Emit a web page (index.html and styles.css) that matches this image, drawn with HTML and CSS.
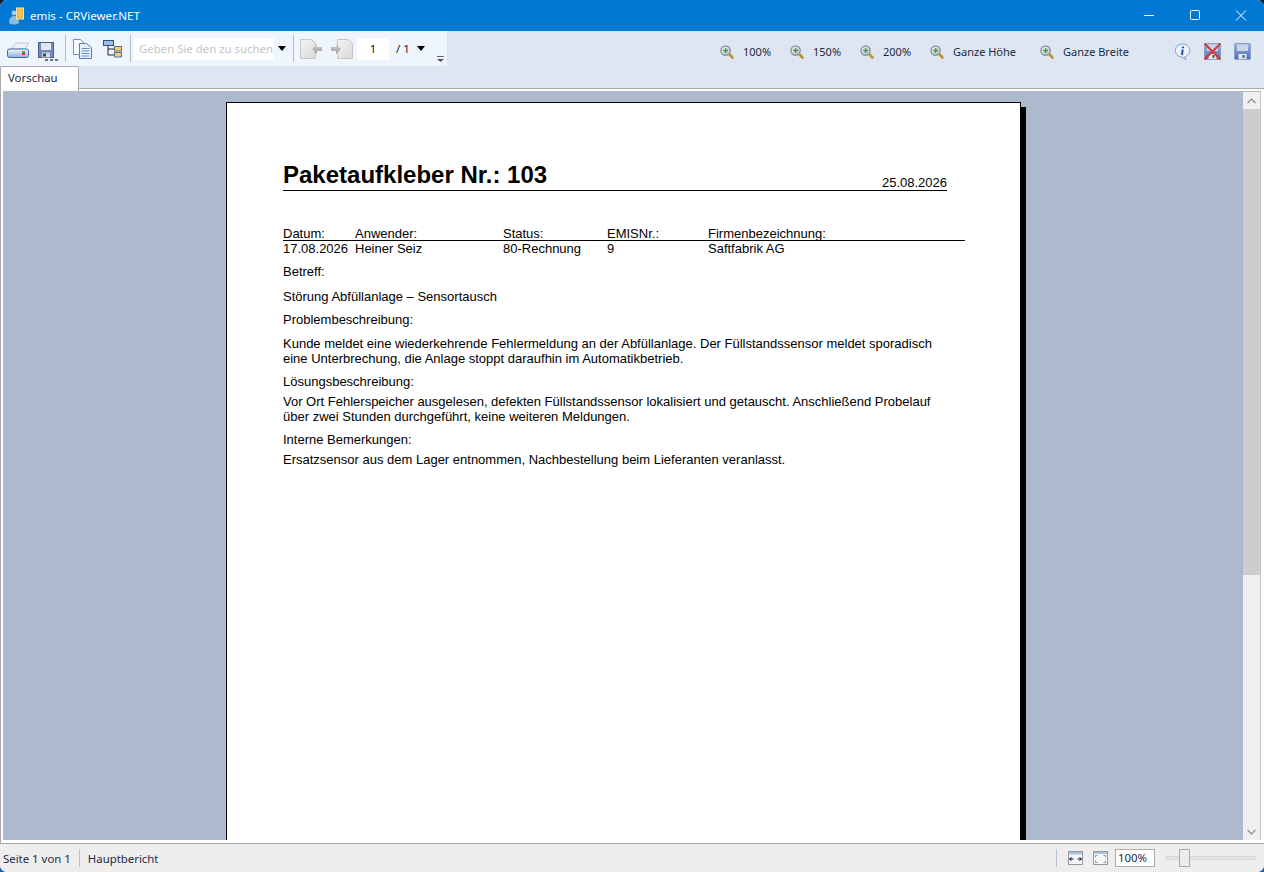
FILE: index.html
```html
<!DOCTYPE html>
<html lang="de">
<head>
    <meta charset="UTF-8">
    <title>emis - CRViewer.NET</title>
    <link rel="stylesheet" href="styles.css">
</head>
<body>
<svg class="defs" width="0" height="0">
    <defs>
        <linearGradient id="lens" x1="0" y1="0" x2="1" y2="1">
            <stop offset="0" stop-color="#f4f6f6"/>
            <stop offset="1" stop-color="#b4c0c0"/>
        </linearGradient>
        <linearGradient id="disk" x1="0" y1="0" x2="0" y2="1">
            <stop offset="0" stop-color="#9db5e0"/>
            <stop offset="1" stop-color="#4a6cb8"/>
        </linearGradient>
        <linearGradient id="sheet" x1="0" y1="0" x2="1" y2="1">
            <stop offset="0" stop-color="#f4f4f4"/>
            <stop offset="1" stop-color="#d8d8d8"/>
        </linearGradient>
        <linearGradient id="pageArrow" x1="0" y1="0" x2="0" y2="1">
            <stop offset="0" stop-color="#d4d4d4"/>
            <stop offset="1" stop-color="#9a9a9a"/>
        </linearGradient>
        <linearGradient id="printer" x1="0" y1="0" x2="0" y2="1">
            <stop offset="0" stop-color="#f4f7fb"/>
            <stop offset="1" stop-color="#8fb0dc"/>
        </linearGradient>
        <symbol id="zoomIcon" viewBox="0 0 14 14">
            <circle cx="5.6" cy="5.6" r="4.6" fill="url(#lens)" stroke="#8b9a9e" stroke-width="1.5"/>
            <path d="M5.6 3.200v4.800M3.200 5.600h4.800" stroke="#4a8f5a" stroke-width="1.500"/>
            <path d="M9.600 9.600l2.800 2.800" stroke="#b8963c" stroke-width="2.800" stroke-linecap="round"/>
        </symbol>
        <symbol id="diskIcon" viewBox="0 0 17 17">
            <rect x=".5" y=".5" width="16" height="16" rx="1" fill="url(#disk)" stroke="#8ea0c6"/>
            <rect x="3" y="1.500" width="11" height="6.500" fill="#c9d5ea"/>
            <rect x="4.500" y="11" width="8" height="5" fill="#e4e8ee"/>
            <rect x="8.500" y="12" width="2" height="3" fill="#555"/>
        </symbol>
    </defs>
</svg>
<div class="window">
    <header class="titlebar">
        <svg class="appIcon" width="17" height="18" viewBox="0 0 17 18">
            <circle cx="6" cy="6" r="2.400" fill="#a9cbe8"/>
            <path d="M1 16c0-5 2-7 5-7s5 2 5 7c-3 2-7 2-10 0z" fill="#8fb9de"/>
            <rect x="8.500" y="1" width="7" height="11" fill="#e8b740" stroke="#f4e4b0"/>
            <rect x="10.500" y="2.500" width="3" height="8" fill="#f0c860"/>
        </svg>
        <span class="titleText">emis - CRViewer.NET</span>
        <div class="winButtons">
            <svg width="46" height="31" viewBox="0 0 46 31"><path d="M18 15.500h10" stroke="#fff"/></svg>
            <svg width="46" height="31" viewBox="0 0 46 31"><rect x="18.500" y="10.500" width="9" height="9" rx="1" fill="none" stroke="#fff"/></svg>
            <svg width="46" height="31" viewBox="0 0 46 31"><path d="M18 10.500l10 10M28 10.500l-10 10" stroke="#fff"/></svg>
        </div>
    </header>

    <div class="toolArea">
        <div class="toolStrip">
            <svg class="stripIcon printIcon" width="23" height="16" viewBox="0 0 23 16">
                <path d="M4 7L9 1h13l-4 6z" fill="#eef1f5" stroke="#c2c8d0"/>
                <rect x=".5" y="7" width="21" height="8.500" rx="2" fill="url(#printer)" stroke="#3f6aa8"/>
                <rect x="15" y="9" width="3" height="2" fill="#3fb34f"/>
                <rect x="15" y="11" width="3" height="2" fill="#d9304f"/>
            </svg>
            <svg class="stripIcon saveIcon" width="21" height="20" viewBox="0 0 21 20">
                <rect x=".5" y=".5" width="15" height="15" fill="#6f8cc0" stroke="#4a5f8c"/>
                <rect x="3" y="1" width="10" height="7" fill="#e2e6ec"/>
                <rect x="4" y="10.500" width="8" height="5" fill="#d6d9de"/>
                <rect x="5" y="11.500" width="3" height="3" fill="#444"/>
                <path d="M7 18h3M12 18h3M17 18h3" stroke="#6c727a" stroke-width="2"/>
            </svg>
            <span class="sep"></span>
            <svg class="stripIcon copyIcon" width="19" height="20" viewBox="0 0 19 20">
                <path d="M.5.500h7l4 4v11h-11z" fill="#f7fbff" stroke="#6f93c6"/>
                <path d="M6.500 4.500h7l5 4v11h-12z" fill="#eaf3fc" stroke="#4f7db8"/>
                <path d="M8.500 9.500h8M8.500 12h8M8.500 14.500h8M8.500 17h8" stroke="#5f94cc"/>
            </svg>
            <svg class="stripIcon treeIcon" width="19" height="18" viewBox="0 0 19 18">
                <rect x=".5" y=".5" width="10" height="5" fill="#9dbce6" stroke="#2e4f8a"/>
                <path d="M5 6v9h6M5 9h6" fill="none" stroke="#222"/>
                <rect x="11.500" y="6.500" width="7" height="4.500" fill="#f3cf6d" stroke="#5b6e94"/>
                <rect x="11.500" y="12.500" width="7" height="4.500" fill="#f3cf6d" stroke="#5b6e94"/>
            </svg>
            <span class="sep sepSearch"></span>
            <div class="searchBox">Geben Sie den zu suchen</div>
            <span class="arrow arrowSearch"></span>
            <span class="sep sepNav"></span>
            <svg class="stripIcon prevIcon" width="23" height="20" viewBox="0 0 23 20">
                <path d="M.5.500h11l4 4v15H.5z" fill="url(#sheet)" stroke="#c6c6c6"/>
                <path d="M12 10l5-5v3h5v4h-5v3z" fill="url(#pageArrow)"/>
            </svg>
            <svg class="stripIcon nextIcon" width="23" height="20" viewBox="0 0 23 20">
                <path d="M7.500.500h11l4 4v15h-15z" fill="url(#sheet)" stroke="#c6c6c6"/>
                <path d="M11 10L6 5v3H1v4h5v3z" fill="url(#pageArrow)"/>
            </svg>
            <div class="pageBox">1</div>
            <span class="pageTotal">/ 1</span>
            <span class="arrow arrowPage"></span>
            <svg class="grip" width="7" height="6" viewBox="0 0 7 6"><path d="M0 .5h7" stroke="#666"/><path d="M0 3h7L3.500 6z" fill="#555"/></svg>
        </div>
        <div class="zoomGroup">
            <div class="zoomBtn"><svg width="14" height="14"><use href="#zoomIcon"/></svg><span>100%</span></div>
            <div class="zoomBtn"><svg width="14" height="14"><use href="#zoomIcon"/></svg><span>150%</span></div>
            <div class="zoomBtn"><svg width="14" height="14"><use href="#zoomIcon"/></svg><span>200%</span></div>
            <div class="zoomBtn zoomWide"><svg width="14" height="14"><use href="#zoomIcon"/></svg><span>Ganze Höhe</span></div>
            <div class="zoomBtn zoomWide"><svg width="14" height="14"><use href="#zoomIcon"/></svg><span>Ganze Breite</span></div>
        </div>
        <div class="rightIcons">
            <svg width="17" height="17" viewBox="0 0 17 17">
                <path d="M8.500 1a7 6.500 0 0 1 2 12.800L12 16.500l-4-2.500A7 6.500 0 0 1 8.500 1z" fill="#eaf2fb" stroke="#7fa3d6"/>
                <path d="M9 3.500v1.800M8.700 6.500L8 12" stroke="#2456a8" stroke-width="2"/>
            </svg>
            <svg width="17" height="17" viewBox="0 0 17 17">
                <use href="#diskIcon"/>
                <path d="M.5.500l16 16M16.500.500l-16 16" stroke="#d9382e" stroke-width="2"/>
            </svg>
            <svg width="17" height="17"><use href="#diskIcon"/></svg>
        </div>
        <div class="tabRow">
            <div class="tab">Vorschau</div>
        </div>
    </div>

    <main class="frame">
        <div class="viewer">
            <div class="canvas">
                <article class="page">
                    <div class="reportHead">
                        <h1>Paketaufkleber Nr.: 103</h1>
                        <span class="printDate">25.08.2026</span>
                    </div>
                    <div class="fieldRow fieldLabels">
                        <span>Datum:</span><span>Anwender:</span><span>Status:</span><span>EMISNr.:</span><span>Firmenbezeichnung:</span>
                    </div>
                    <div class="fieldRow fieldValues">
                        <span>17.08.2026</span><span>Heiner Seiz</span><span>80-Rechnung</span><span>9</span><span>Saftfabrik AG</span>
                    </div>
                    <p class="rep rBetreff">Betreff:</p>
                    <p class="rep rStoerung">Störung Abfüllanlage – Sensortausch</p>
                    <p class="rep rProblem">Problembeschreibung:</p>
                    <p class="rep rKunde">Kunde meldet eine wiederkehrende Fehlermeldung an der Abfüllanlage. Der Füllstandssensor meldet sporadisch<br>eine Unterbrechung, die Anlage stoppt daraufhin im Automatikbetrieb.</p>
                    <p class="rep rLoesung">Lösungsbeschreibung:</p>
                    <p class="rep rVor">Vor Ort Fehlerspeicher ausgelesen, defekten Füllstandssensor lokalisiert und getauscht. Anschließend Probelauf<br>über zwei Stunden durchgeführt, keine weiteren Meldungen.</p>
                    <p class="rep rInterne">Interne Bemerkungen:</p>
                    <p class="rep rErsatz">Ersatzsensor aus dem Lager entnommen, Nachbestellung beim Lieferanten veranlasst.</p>
                </article>
            </div>
            <div class="scrollbar">
                <div class="scrollBtn"><svg width="9" height="6" viewBox="0 0 9 6"><path d="M.5 5l4-4 4 4" fill="none" stroke="#8a8a8a" stroke-width="1.200"/></svg></div>
                <div class="scrollThumb"></div>
                <div class="scrollRest"></div>
                <div class="scrollBtn"><svg width="9" height="6" viewBox="0 0 9 6"><path d="M.5 1l4 4 4-4" fill="none" stroke="#8a8a8a" stroke-width="1.200"/></svg></div>
            </div>
        </div>
    </main>

    <footer class="statusBar">
        <span class="stPage">Seite 1 von 1</span>
        <span class="stSep"></span>
        <span class="stReport">Hauptbericht</span>
        <span class="stSep stSepRight"></span>
        <svg class="fitIcon" width="15" height="14" viewBox="0 0 15 14">
            <rect x=".5" y=".5" width="14" height="13" fill="#f4f6f8" stroke="#8f9aa6"/>
            <rect x="1" y="1" width="13" height="2.500" fill="#a9c4de"/>
            <path d="M1.500 8h4M1.500 8l2-1.500M1.500 8l2 1.500M13.500 8h-4M13.500 8l-2-1.500M13.500 8l-2 1.500" fill="none" stroke="#111"/>
        </svg>
        <svg class="fitIcon fitPage" width="15" height="14" viewBox="0 0 15 14">
            <rect x=".5" y=".5" width="14" height="13" fill="#f4f6f8" stroke="#8f9aa6"/>
            <rect x="1" y="1" width="13" height="2" fill="#a9c4de"/>
            <path d="M2.500 6.500v-2h2M12.500 6.500v-2h-2M2.500 9.500v2h2M12.500 9.500v2h-2" fill="none" stroke="#8f9aa6"/>
        </svg>
        <div class="zoomValue">100%</div>
        <div class="slider"><span class="sliderThumb"></span></div>
    </footer>
</div>
</body>
</html>
```

FILE: styles.css
```css
html, body {
    margin: 0;
    height: 100%;
}
body {
    background: linear-gradient(#10161f, #0a62b0);
    overflow: hidden;
}
.defs {
    position: absolute;
}
.window {
    width: 1264px;
    height: 872px;
    display: flex;
    flex-direction: column;
    border-radius: 7px;
    overflow: hidden;
    background: #fff;
    font-family: "Noto Sans", sans-serif;
    font-size: 11.4px;
    color: #1b2a44;
}

/* title bar */
.titlebar {
    height: 31px;
    flex: none;
    display: flex;
    align-items: center;
    background: #0078d4;
    color: #fff;
    padding-left: 8px;
}
.titleText {
    font-size: 11.6px;
}
.appIcon {
    margin-right: 5px;
}
.winButtons {
    margin-left: auto;
    display: flex;
}

/* toolbar */
.toolArea {
    height: 57px;
    flex: none;
    position: relative;
    display: flex;
    align-items: flex-start;
    background: #dde6f1;
}
.toolStrip {
    width: 447px;
    height: 35px;
    flex: none;
    display: flex;
    align-items: center;
    background: #eef5fd;
    position: relative;
}
.stripIcon {
    flex: none;
}
.printIcon { margin-left: 7px; margin-top: 2px; }
.saveIcon { margin-left: 8px; margin-top: 6px; }
.copyIcon { margin-left: 7px; }
.treeIcon { margin-left: 11px; }
.sep {
    width: 1px;
    height: 27px;
    background: #b4bcc8;
    margin-left: 6px;
    flex: none;
}
.sepSearch { margin-left: 8px; }
.sepNav { margin-left: 7px; }
.searchBox {
    width: 135px;
    height: 22px;
    margin-left: 3px;
    padding-left: 5px;
    line-height: 22px;
    background: #fff;
    color: #c4c4c4;
    white-space: nowrap;
}
.arrow {
    width: 0;
    height: 0;
    border-left: 4.5px solid transparent;
    border-right: 4.5px solid transparent;
    border-top: 5px solid #000;
    flex: none;
}
.arrowSearch { margin-left: 4px; }
.prevIcon { margin-left: 6px; }
.nextIcon { margin-left: 7px; }
.pageBox {
    width: 32px;
    height: 22px;
    margin-left: 4px;
    line-height: 22px;
    text-align: center;
    background: #fff;
    color: #111;
}
.pageTotal {
    margin-left: 7px;
    width: 21px;
    color: #222;
}
.grip {
    position: absolute;
    left: 437px;
    top: 25px;
}
.zoomGroup {
    position: absolute;
    left: 720px;
    top: 14px;
    display: flex;
    font-size: 11px;
}
.zoomBtn {
    width: 70px;
    display: flex;
    align-items: center;
    line-height: 14px;
    white-space: nowrap;
}
.zoomBtn svg {
    flex: none;
}
.zoomWide {
    width: 110px;
}
.zoomBtn span {
    margin-left: 9px;
}
.rightIcons {
    position: absolute;
    left: 1174px;
    top: 12px;
    display: flex;
    gap: 13px;
}
.tabRow {
    position: absolute;
    left: 0;
    top: 35px;
}
.tab {
    width: 79px;
    height: 25px;
    box-sizing: border-box;
    padding-left: 7px;
    line-height: 22px;
    background: #fff;
    border: 1px solid #a9a9a9;
    border-bottom: none;
    border-radius: 2px 2px 0 0;
    position: relative;
    z-index: 1;
}

/* report area */
.frame {
    flex: 1;
    min-height: 0;
    border-top: 1px solid #a9a9a9;
    border-bottom: 1px solid #a9a9a9;
    border-left: 1px solid #a9a9a9;
    padding: 2px 3px 3px 2px;
    display: flex;
    background: #fff;
}
.viewer {
    flex: 1;
    display: flex;
    min-width: 0;
    background: #adb9cd;
    border-right: 1px solid #c4c4c4;
}
.canvas {
    flex: 1;
    padding: 11px 0 0 223px;
    overflow: hidden;
}
.page {
    width: 795px;
    height: 900px;
    box-sizing: border-box;
    border: 1px solid #000;
    background: #fff;
    box-shadow: 5px 5px 0 #000;
    padding: 58px 73px 0 56px;
    font-family: "Liberation Sans", Arial, sans-serif;
    font-size: 13px;
    line-height: 15px;
    color: #000;
}
.reportHead {
    display: flex;
    justify-content: space-between;
    align-items: flex-end;
    width: 664px;
    height: 29px;
    border-bottom: 1px solid #000;
}
.reportHead h1 {
    margin: 0 0 1px;
    font-size: 24px;
    line-height: 28px;
    font-weight: bold;
}
.printDate {
    line-height: 15px;
}
.fieldRow {
    display: grid;
    grid-template-columns: 72px 148px 104px 101px 257px;
    width: 682px;
}
.fieldLabels {
    margin-top: 35px;
    height: 14px;
    border-bottom: 1px solid #000;
}
.rep {
    margin: 0;
}
.rBetreff { margin-top: 8px; }
.rStoerung { margin-top: 10px; }
.rProblem { margin-top: 8px; }
.rKunde { margin-top: 9px; }
.rLoesung { margin-top: 8px; }
.rVor { margin-top: 5px; }
.rInterne { margin-top: 8px; }
.rErsatz { margin-top: 5px; }

/* scrollbar */
.scrollbar {
    width: 17px;
    flex: none;
    display: flex;
    flex-direction: column;
    background: #f0f0f0;
    margin-top: 1px;
}
.scrollBtn {
    height: 17px;
    flex: none;
    display: flex;
    align-items: center;
    justify-content: center;
}
.scrollThumb {
    height: 466px;
    flex: none;
    background: #cdcdcd;
}
.scrollRest {
    flex: 1;
}

/* status bar */
.statusBar {
    height: 28px;
    flex: none;
    display: flex;
    align-items: center;
    background: #f0eded;
    padding-left: 3px;
    position: relative;
}
.stSep {
    width: 1px;
    height: 18px;
    background: #b9c2cc;
    margin-left: 8px;
}
.stReport {
    margin-left: 8px;
}
.stSepRight {
    margin-left: auto;
    margin-right: 11px;
}
.fitPage {
    margin-left: 10px;
}
.zoomValue {
    width: 40px;
    height: 18px;
    box-sizing: border-box;
    margin-left: 7px;
    border: 1px solid #aaa;
    background: #fff;
    line-height: 16px;
    padding-left: 2px;
}
.slider {
    width: 90px;
    height: 4px;
    margin: 0 8px 0 11px;
    background: #e2e5e5;
    border: 1px solid #d8d8d8;
    box-sizing: border-box;
    position: relative;
}
.sliderThumb {
    position: absolute;
    left: 12px;
    top: -8px;
    width: 11px;
    height: 18px;
    box-sizing: border-box;
    border: 1px solid #aaa;
    background: #ececec;
}
```
